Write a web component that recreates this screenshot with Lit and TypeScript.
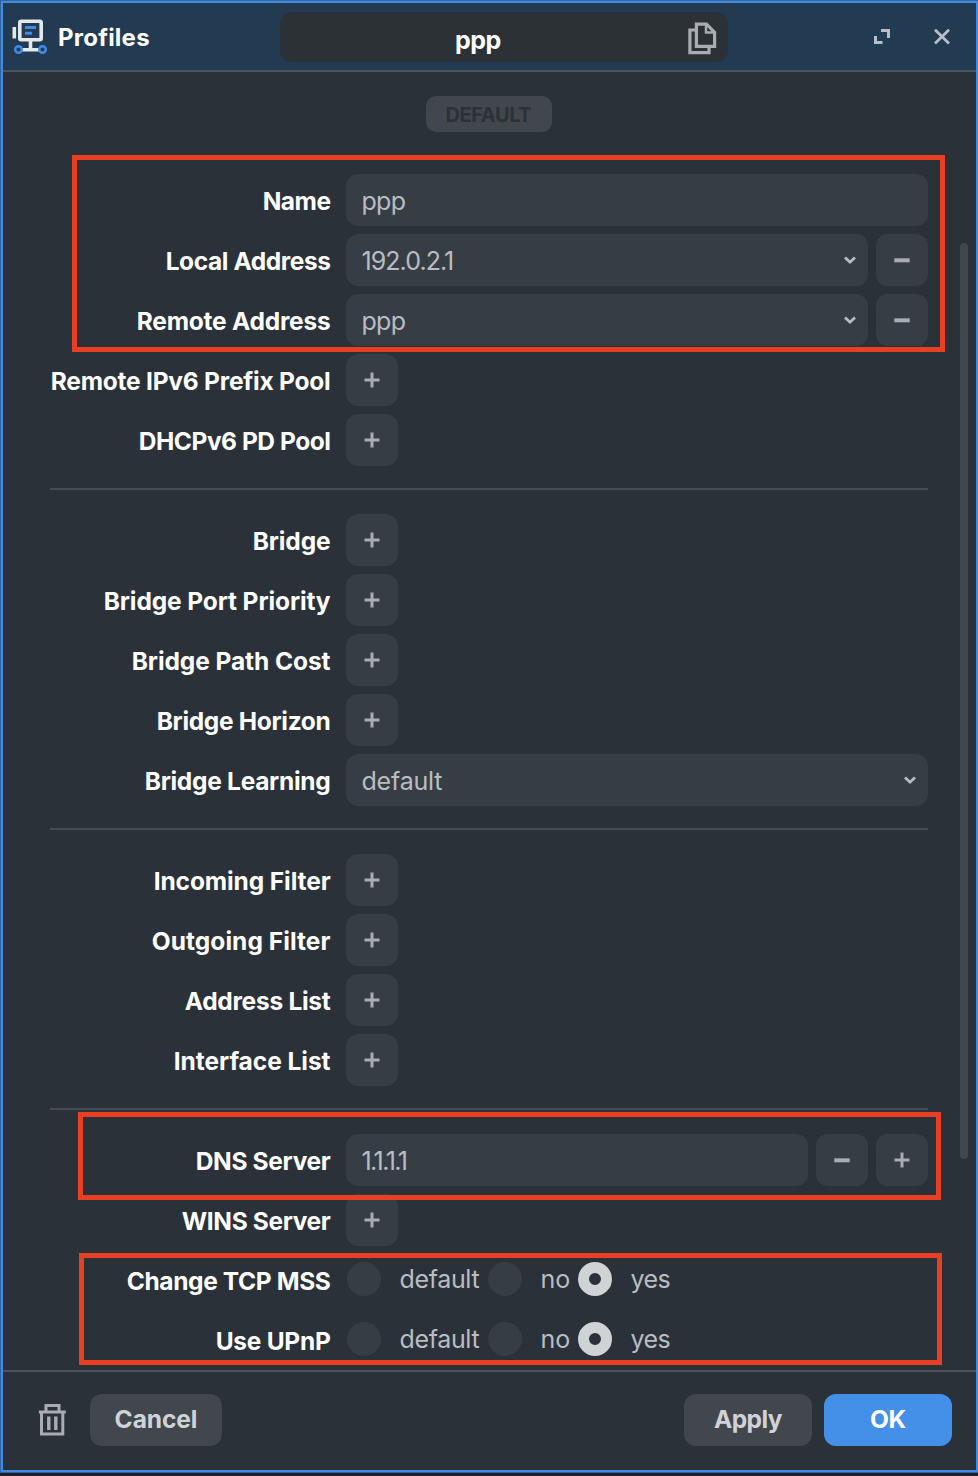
import { LitElement, html, svg, css, nothing } from "lit";
import { customElement, property } from "lit/decorators.js";

type Row = {
  label: string;
  width: number;
  kind: "text" | "select" | "add" | "radio";
  value?: string;
  valueWidth?: number;
  actions?: string[];
};

const groups: Row[][] = [
  [
    { label: "Name", width: 67, kind: "text", value: "ppp", valueWidth: 43 },
    { label: "Local Address", width: 164, kind: "select", value: "192.0.2.1", valueWidth: 91, actions: ["minus"] },
    { label: "Remote Address", width: 193, kind: "select", value: "ppp", valueWidth: 43, actions: ["minus"] },
    { label: "Remote IPv6 Prefix Pool", width: 279, kind: "add" },
    { label: "DHCPv6 PD Pool", width: 191, kind: "add" },
  ],
  [
    { label: "Bridge", width: 77, kind: "add" },
    { label: "Bridge Port Priority", width: 226, kind: "add" },
    { label: "Bridge Path Cost", width: 198, kind: "add" },
    { label: "Bridge Horizon", width: 173, kind: "add" },
    { label: "Bridge Learning", width: 185, kind: "select", value: "default", valueWidth: 80 },
  ],
  [
    { label: "Incoming Filter", width: 176, kind: "add" },
    { label: "Outgoing Filter", width: 178, kind: "add" },
    { label: "Address List", width: 145, kind: "add" },
    { label: "Interface List", width: 156, kind: "add" },
  ],
  [
    { label: "DNS Server", width: 134, kind: "text", value: "1.1.1.1", valueWidth: 44, actions: ["minus", "plus"] },
    { label: "WINS Server", width: 148, kind: "add" },
    { label: "Change TCP MSS", width: 203, kind: "radio" },
    { label: "Use UPnP", width: 114, kind: "radio" },
  ],
];

const glyphs: Record<string, unknown> = {
  plus: svg`<path d="M8 0.5V15.5M0.5 8H15.5" stroke-width="3"/>`,
  minus: svg`<path d="M0.3 8.3H15.7" stroke-width="4"/>`,
  chevron: svg`<path d="M3 5.5L8 10.2L13 5.5" stroke-width="2.8"/>`,
};
const glyph = (name: string) =>
  html`<svg width="16" height="16" viewBox="0 0 16 16" fill="none" stroke="currentColor">${glyphs[name]}</svg>`;

/* One line of text whose tracking is adjusted to reach a set width. */
@customElement("fit-text")
class FitText extends LitElement {
  @property({ type: Number }) width = 0;
  static styles = css`
    :host { display: inline-block; white-space: pre; }
  `;
  render() {
    return html`<slot></slot>`;
  }
  firstUpdated() {
    const count = (this.textContent ?? "").length;
    const natural = this.getBoundingClientRect().width;
    const step = (this.width + 0.8 - natural) / count;
    this.style.letterSpacing = `${step.toFixed(3)}px`;
  }
}

@customElement("app-root")
class AppRoot extends LitElement {
  static styles = css`
    :host {
      display: block;
      position: relative;
      box-sizing: border-box;
      width: 978px;
      height: 1476px;
      padding: 1px 0 4px 1px;
      overflow: hidden;
      background: #1d2127;
      font: 400 25px/52px Inter, sans-serif;
      color: #b9bdc1;
    }
    * { box-sizing: border-box; }
    svg { display: block; flex: none; }
    .window {
      height: 1471px;
      display: flex;
      flex-direction: column;
      background: #2b3138;
      border: 2px solid #428be2;
      box-shadow: 0 0 0 1px #31649c;
    }
    header {
      height: 69px;
      flex: none;
      display: grid;
      grid-template-columns: 277px 448px 1fr;
      align-items: start;
      background: #233a53;
      border-bottom: 2px solid #4b5259;
    }
    .brand { display: flex; align-items: center; gap: 10px; height: 67px; padding-left: 7px; color: #fff; font-weight: 700; font-size: 24px; }
    .brand svg { margin-top: -2px; }
    .brand fit-text { padding-top: 2px; }
    .title {
      height: 50px;
      margin-top: 9px;
      border-radius: 12px;
      background: #2c3136;
      display: grid;
      grid-template-columns: 1fr auto;
      align-items: center;
      padding: 0 11px 0 175px;
      color: #fff;
      font-weight: 700;
    }
    .title fit-text { justify-self: start; padding-top: 2px; }
    .title svg { margin-top: -2px; }
    .tools { display: flex; justify-content: flex-end; gap: 42px; padding: 25px 25px 0 0; color: #b6bec6; }
    main { flex: 1; min-height: 0; display: flex; padding-left: 47px; overflow: hidden; }
    .form { width: 878px; flex: none; padding-top: 24px; }
    .badge {
      width: 126px;
      height: 36px;
      margin: 0 0 42px 376px;
      border-radius: 10px;
      background: #42474e;
      color: #2c3137;
      font-weight: 700;
      font-size: 20px;
      line-height: 38px;
      padding-left: 19.5px;
    }
    .group { display: grid; gap: 8px; }
    .group + .group { margin-top: 22px; padding-top: 24px; border-top: 2px solid #464c53; }
    .row { display: grid; grid-template-columns: 280px 582px; gap: 16px; height: 52px; }
    .label { height: 52px; text-align: right; color: #fff; font-weight: 700; font-size: 24.5px; padding-top: 1px; }
    .label fit-text { margin-right: -0.5px; }
    .controls { display: flex; gap: 8px; }
    .field {
      flex: 1;
      display: flex;
      align-items: center;
      justify-content: space-between;
      height: 52px;
      padding: 0 10px 0 15.5px;
      border-radius: 12px;
      background: #373d45;
    }
    .field fit-text { padding-top: 2.5px; }
    .square {
      width: 52px;
      height: 52px;
      display: grid;
      place-items: center;
      border-radius: 12px;
      background: #373d45;
      color: #a9adb1;
    }
    .radios { display: flex; align-items: center; height: 50px; padding-left: 0.5px; }
    .dot { width: 34px; height: 34px; margin-right: 19px; border-radius: 50%; background: #373d45; }
    .dot.on { border: 11.5px solid #d0d3d6; background: #2b3138; }
    .option { width: 88px; }
    .option.short { width: 37px; }
    .bar { width: 8px; height: 916px; margin: 171px 0 0 32px; border-radius: 4px; background: #41474f; }
    footer {
      height: 100px;
      flex: none;
      display: flex;
      border-top: 2px solid #4b5259;
      padding: 22px 24px 0 35px;
      font-weight: 700;
      font-size: 24.5px;
      line-height: 51px;
      color: #d0d3d6;
    }
    footer svg { margin: 9px 24px 0 0; color: #a9adb1; }
    .button { width: 128px; height: 52px; border-radius: 12px; background: #42464d; text-align: center; }
    .cancel { width: 132px; margin-right: auto; }
    .ok { margin-left: 12px; background: #4490e9; color: #fff; }
    .mark { position: absolute; border: 5px solid #e93f25; }
    .mark.address { left: 72px; top: 155px; width: 873px; height: 197px; }
    .mark.dns { left: 78px; top: 1112px; width: 863px; height: 88px; }
    .mark.options { left: 79px; top: 1253px; width: 863px; height: 112px; }
  `;

  control(row: Row) {
    if (row.kind === "add") return html`<div class="square">${glyph("plus")}</div>`;
    if (row.kind === "radio")
      return html`<div class="radios">
        <i class="dot"></i><span class="option"><fit-text width="79">default</fit-text></span>
        <i class="dot"></i><span class="option short"><fit-text width="29">no</fit-text></span>
        <i class="dot on"></i><span><fit-text width="39">yes</fit-text></span>
      </div>`;
    return html`<div class="field">
        <fit-text width=${row.valueWidth ?? 0}>${row.value}</fit-text>
        ${row.kind === "select" ? glyph("chevron") : nothing}
      </div>
      ${(row.actions ?? []).map((name) => html`<div class="square">${glyph(name)}</div>`)}`;
  }

  render() {
    return html`
      <div class="window">
        <header>
          <div class="brand">
            <svg width="38" height="38" viewBox="10 16 38 38" fill="none">
              <g stroke="#e4e8ec" stroke-width="3.6">
                <rect x="19.8" y="20.2" width="21.4" height="18.6" rx="1.5" />
                <path d="M14.3 26V37.5M30.5 39V48.5M22 48.8H39" />
              </g>
              <g stroke="#3f8de8">
                <path d="M25 26.5H36M25 32.3H32" stroke-width="3" />
                <circle cx="18.5" cy="48.5" r="3.3" stroke-width="2.4" />
                <circle cx="42.5" cy="48.5" r="3.3" stroke-width="2.4" />
              </g>
            </svg>
            <fit-text width="91">Profiles</fit-text>
          </div>
          <div class="title">
            <fit-text width="45">ppp</fit-text>
            <svg width="30" height="34" viewBox="687 21 30 34" fill="none" stroke="#a9adb1" stroke-width="3.2">
              <path d="M695.5 30H689.9V52.6H709V47" />
              <path d="M696.4 24.2H706.5L714.6 32.3V46.3H696.4Z" />
              <path d="M706 24.5V32.5H714" stroke-width="2.4" />
            </svg>
          </div>
          <div class="tools">
            <svg width="18" height="18" viewBox="873 28 18 18" fill="none" stroke="currentColor" stroke-width="3">
              <path d="M881 30.5H888.5V38M875.5 36V42.5H882.5" />
            </svg>
            <svg width="18" height="18" viewBox="933 28 18 18" fill="none" stroke="currentColor" stroke-width="2.8">
              <path d="M935 29.8L949 43.5M949 29.8L935 43.5" />
            </svg>
          </div>
        </header>
        <main>
          <div class="form">
            <div class="badge"><fit-text width="85">DEFAULT</fit-text></div>
            ${groups.map(
              (rows) => html`<section class="group">
                ${rows.map(
                  (row) => html`<div class="row">
                    <div class="label"><fit-text width=${row.width}>${row.label}</fit-text></div>
                    <div class="controls">${this.control(row)}</div>
                  </div>`
                )}
              </section>`
            )}
          </div>
          <div class="bar"></div>
        </main>
        <footer>
          <svg width="28" height="34" viewBox="38 1403 28 34" fill="none" stroke="currentColor" stroke-width="3">
            <path d="M38.8 1412H65.8M46 1411V1405.5H59V1411M41.5 1413V1433.9H62.8V1413" />
            <path d="M48.8 1416.5V1430M55.8 1416.5V1430" stroke-width="3.4" />
          </svg>
          <div class="button cancel"><fit-text width="82">Cancel</fit-text></div>
          <div class="button"><fit-text width="67">Apply</fit-text></div>
          <div class="button ok"><fit-text width="35">OK</fit-text></div>
        </footer>
      </div>
      <div class="mark address"></div>
      <div class="mark dns"></div>
      <div class="mark options"></div>
    `;
  }
}
